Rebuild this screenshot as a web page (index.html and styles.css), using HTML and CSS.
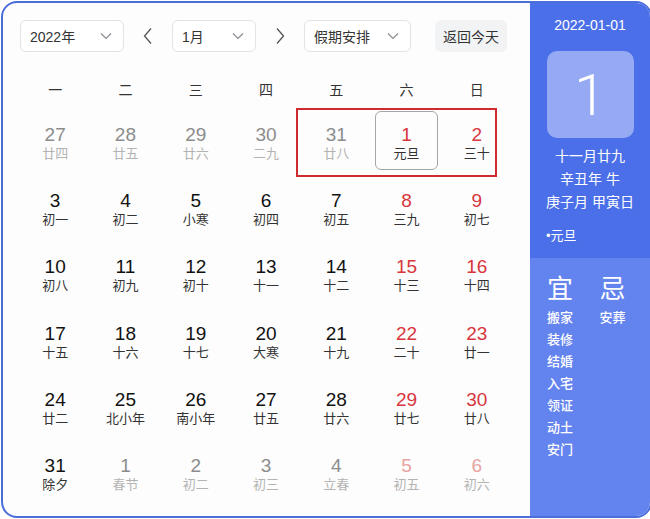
FILE: index.html
```html
<!DOCTYPE html>
<html lang="zh-CN">
<head>
<meta charset="utf-8">
<title>日历</title>
<link rel="stylesheet" href="styles.css">
</head>
<body>
<div class="widget">
  <section class="cal">
    <div class="toolbar">
      <div class="select sel-year"><span>2022年</span><svg class="chev" viewBox="0 0 12 8"><path d="M1 1.5 L6 6.5 L11 1.5"/></svg></div>
      <button class="nav"><svg viewBox="0 0 10 18"><path d="M8 1.5 L1.5 9 L8 16.5"/></svg></button>
      <div class="select sel-month"><span>1月</span><svg class="chev" viewBox="0 0 12 8"><path d="M1 1.5 L6 6.5 L11 1.5"/></svg></div>
      <button class="nav"><svg viewBox="0 0 10 18"><path d="M2 1.5 L8.5 9 L2 16.5"/></svg></button>
      <div class="select sel-holiday"><span>假期安排</span><svg class="chev" viewBox="0 0 12 8"><path d="M1 1.5 L6 6.5 L11 1.5"/></svg></div>
      <button class="today-btn">返回今天</button>
    </div>
    <div class="weekdays">
      <span>一</span><span>二</span><span>三</span><span>四</span><span>五</span><span>六</span><span>日</span>
    </div>
    <div class="grid">
      <div class="cell other"><div class="day"><b>27</b><i>廿四</i></div></div>
      <div class="cell other"><div class="day"><b>28</b><i>廿五</i></div></div>
      <div class="cell other"><div class="day"><b>29</b><i>廿六</i></div></div>
      <div class="cell other"><div class="day"><b>30</b><i>二九</i></div></div>
      <div class="cell other"><div class="day"><b>31</b><i>廿八</i></div></div>
      <div class="cell red"><div class="day today"><b>1</b><i>元旦</i></div></div>
      <div class="cell red"><div class="day"><b>2</b><i>三十</i></div></div>

      <div class="cell"><div class="day"><b>3</b><i>初一</i></div></div>
      <div class="cell"><div class="day"><b>4</b><i>初二</i></div></div>
      <div class="cell"><div class="day"><b>5</b><i>小寒</i></div></div>
      <div class="cell"><div class="day"><b>6</b><i>初四</i></div></div>
      <div class="cell"><div class="day"><b>7</b><i>初五</i></div></div>
      <div class="cell red"><div class="day"><b>8</b><i>三九</i></div></div>
      <div class="cell red"><div class="day"><b>9</b><i>初七</i></div></div>

      <div class="cell"><div class="day"><b>10</b><i>初八</i></div></div>
      <div class="cell"><div class="day"><b>11</b><i>初九</i></div></div>
      <div class="cell"><div class="day"><b>12</b><i>初十</i></div></div>
      <div class="cell"><div class="day"><b>13</b><i>十一</i></div></div>
      <div class="cell"><div class="day"><b>14</b><i>十二</i></div></div>
      <div class="cell red"><div class="day"><b>15</b><i>十三</i></div></div>
      <div class="cell red"><div class="day"><b>16</b><i>十四</i></div></div>

      <div class="cell"><div class="day"><b>17</b><i>十五</i></div></div>
      <div class="cell"><div class="day"><b>18</b><i>十六</i></div></div>
      <div class="cell"><div class="day"><b>19</b><i>十七</i></div></div>
      <div class="cell"><div class="day"><b>20</b><i>大寒</i></div></div>
      <div class="cell"><div class="day"><b>21</b><i>十九</i></div></div>
      <div class="cell red"><div class="day"><b>22</b><i>二十</i></div></div>
      <div class="cell red"><div class="day"><b>23</b><i>廿一</i></div></div>

      <div class="cell"><div class="day"><b>24</b><i>廿二</i></div></div>
      <div class="cell"><div class="day"><b>25</b><i>北小年</i></div></div>
      <div class="cell"><div class="day"><b>26</b><i>南小年</i></div></div>
      <div class="cell"><div class="day"><b>27</b><i>廿五</i></div></div>
      <div class="cell"><div class="day"><b>28</b><i>廿六</i></div></div>
      <div class="cell red"><div class="day"><b>29</b><i>廿七</i></div></div>
      <div class="cell red"><div class="day"><b>30</b><i>廿八</i></div></div>

      <div class="cell"><div class="day"><b>31</b><i>除夕</i></div></div>
      <div class="cell other"><div class="day"><b>1</b><i>春节</i></div></div>
      <div class="cell other"><div class="day"><b>2</b><i>初二</i></div></div>
      <div class="cell other"><div class="day"><b>3</b><i>初三</i></div></div>
      <div class="cell other"><div class="day"><b>4</b><i>立春</i></div></div>
      <div class="cell other red"><div class="day"><b>5</b><i>初五</i></div></div>
      <div class="cell other red"><div class="day"><b>6</b><i>初六</i></div></div>

      <div class="mark"></div>
    </div>
  </section>
  <aside class="side">
    <div class="side-top">
      <div class="side-date">2022-01-01</div>
      <div class="big-day">1</div>
      <div class="lunar">
        <div>十一月廿九</div>
        <div>辛丑年 牛</div>
        <div>庚子月 甲寅日</div>
      </div>
      <div class="fest">•元旦</div>
    </div>
    <div class="side-bottom">
      <div class="col">
        <div class="col-title">宜</div>
        <div class="item">搬家</div>
        <div class="item">装修</div>
        <div class="item">结婚</div>
        <div class="item">入宅</div>
        <div class="item">领证</div>
        <div class="item">动土</div>
        <div class="item">安门</div>
      </div>
      <div class="col">
        <div class="col-title">忌</div>
        <div class="item">安葬</div>
      </div>
    </div>
  </aside>
</div>
</body>
</html>
```

FILE: styles.css
```css
* { box-sizing: border-box; }
html, body {
  margin: 0;
  padding: 0;
  background: #ffffff;
  overflow: hidden;
}
body {
  font-family: "Liberation Sans", "Noto Sans CJK SC", sans-serif;
  color: #222;
}
.widget {
  margin: 1px 0 0 1px;
  width: 651px;
  height: 517px;
  border: 2px solid #4a6fda;
  border-radius: 16px;
  overflow: hidden;
  display: flex;
  background: #fdfdfd;
}
.cal {
  width: 527px;
  flex: none;
  padding: 17px 18px 0 17px;
}
.toolbar {
  display: flex;
  align-items: center;
  height: 32px;
}
.select {
  height: 32px;
  border: 1px solid #e2e3e6;
  border-radius: 6px;
  background: #fff;
  display: flex;
  align-items: center;
  justify-content: space-between;
  padding: 0 11px 0 9px;
  font-size: 14px;
  color: #333;
}
.sel-year { width: 104px; }
.sel-month { width: 84px; }
.sel-holiday { width: 107px; }
.chev {
  width: 12px;
  height: 8px;
  fill: none;
  stroke: #8a8d93;
  stroke-width: 1.2;
}
.nav {
  width: 48px;
  height: 32px;
  border: 0;
  background: transparent;
  padding: 0;
  display: flex;
  align-items: center;
  justify-content: center;
}
.nav svg {
  width: 10px;
  height: 18px;
  fill: none;
  stroke: #555;
  stroke-width: 1.3;
}
.today-btn {
  margin-left: 24px;
  width: 72px;
  height: 32px;
  border: 0;
  border-radius: 6px;
  background: #f2f3f5;
  font-family: "Liberation Sans", "Noto Sans CJK SC", sans-serif;
  font-size: 14px;
  color: #333;
  padding: 0;
}
.weekdays {
  margin-top: 22px;
  height: 30px;
  margin-bottom: 3px;
  display: grid;
  grid-template-columns: repeat(7, 1fr);
  align-items: center;
  text-align: center;
  font-size: 14px;
  color: #333;
}
.grid {
  position: relative;
  display: grid;
  grid-template-columns: repeat(7, 1fr);
  grid-auto-rows: 66.4px;
}
.cell {
  padding: 3.5px;
}
.day {
  height: 59px;
  border: 1px solid transparent;
  border-radius: 6px;
  display: flex;
  flex-direction: column;
  align-items: center;
  justify-content: center;
  padding-top: 6px;
}
.day.today {
  border-color: #a3a5aa;
}
.day b {
  font-weight: normal;
  font-size: 19px;
  line-height: 22px;
  color: #111;
}
.day i {
  font-style: normal;
  font-size: 13px;
  line-height: 18px;
  margin-top: -1px;
  color: #333;
}
.cell.red .day b { color: #d8363c; }
.cell.other .day b { color: #8c8c8c; }
.cell.other .day i { color: #b3b3b3; }
.cell.other.red .day b { color: #e8a3a3; }
.mark {
  position: absolute;
  left: 276px;
  top: 1px;
  width: 201px;
  height: 69px;
  border: 2px solid #cf2a2e;
  pointer-events: none;
}
.side {
  width: 122px;
  flex: none;
  display: flex;
  flex-direction: column;
  color: #fff;
  font-family: "Liberation Sans", "Noto Sans CJK SC", sans-serif;
}
.side-top {
  background: #4b6fe8;
  height: 255px;
  padding: 12px 2px 0 0;
  display: flex;
  flex-direction: column;
  align-items: center;
}
.side-date {
  font-size: 14px;
  line-height: 20px;
}
.big-day {
  margin-top: 16px;
  width: 87px;
  height: 87px;
  border-radius: 10px;
  background: #95aaf3;
  display: flex;
  align-items: center;
  justify-content: center;
  font-family: Roboto, "Liberation Sans", sans-serif;
  font-weight: 300;
  font-size: 58px;
}
.lunar {
  margin-top: 7px;
  text-align: center;
  font-size: 14px;
  line-height: 23px;
}
.fest {
  align-self: flex-start;
  margin-top: 12px;
  padding-left: 16px;
  font-size: 13px;
  line-height: 20px;
}
.side-bottom {
  flex: 1;
  background: #6383ee;
  display: flex;
  padding: 16px 0 0 17px;
}
.col {
  width: 61px;
}
.col-title {
  font-size: 26px;
  line-height: 30px;
  margin-bottom: 3px;
}
.item {
  font-size: 13px;
  line-height: 22px;
  font-weight: 500;
}
```
